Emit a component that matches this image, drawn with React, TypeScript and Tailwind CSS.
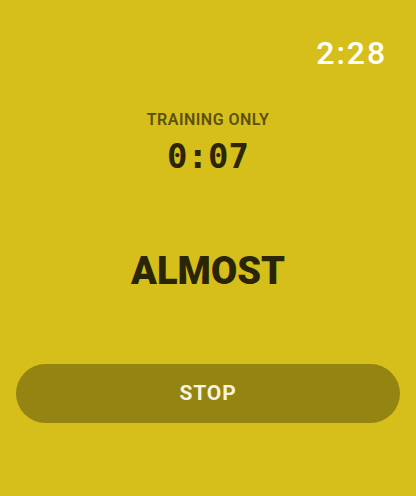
export default function App() {
  return (
    <div className="w-[416px] h-[496px] bg-[#d6bf1a] flex flex-col px-4 font-['Roboto',sans-serif]">
      <div className="flex justify-end pt-[37px] pr-[13px]">
        <span className="text-white text-[32px] leading-none font-medium tracking-[0.06em]">2:28</span>
      </div>
      <div className="flex flex-col items-center mt-[43px]">
        <span className="text-[#5b500a] text-[16px] font-semibold tracking-[0.03em] leading-none">
          TRAINING ONLY
        </span>
        <span className="mt-[11px] text-[#2c2605] text-[34px] leading-none font-bold font-['DejaVu_Sans_Mono',monospace]">
          0:07
        </span>
      </div>
      <div className="flex justify-center mt-[79px]">
        <span className="text-[#2a2505] text-[38px] font-black leading-none">
          ALMOST
        </span>
      </div>
      <button className="mt-[74px] h-[59px] w-full rounded-full bg-[#948412] text-[#f8f3dc] text-[21px] font-bold tracking-[0.04em]">
        STOP
      </button>
    </div>
  );
}
